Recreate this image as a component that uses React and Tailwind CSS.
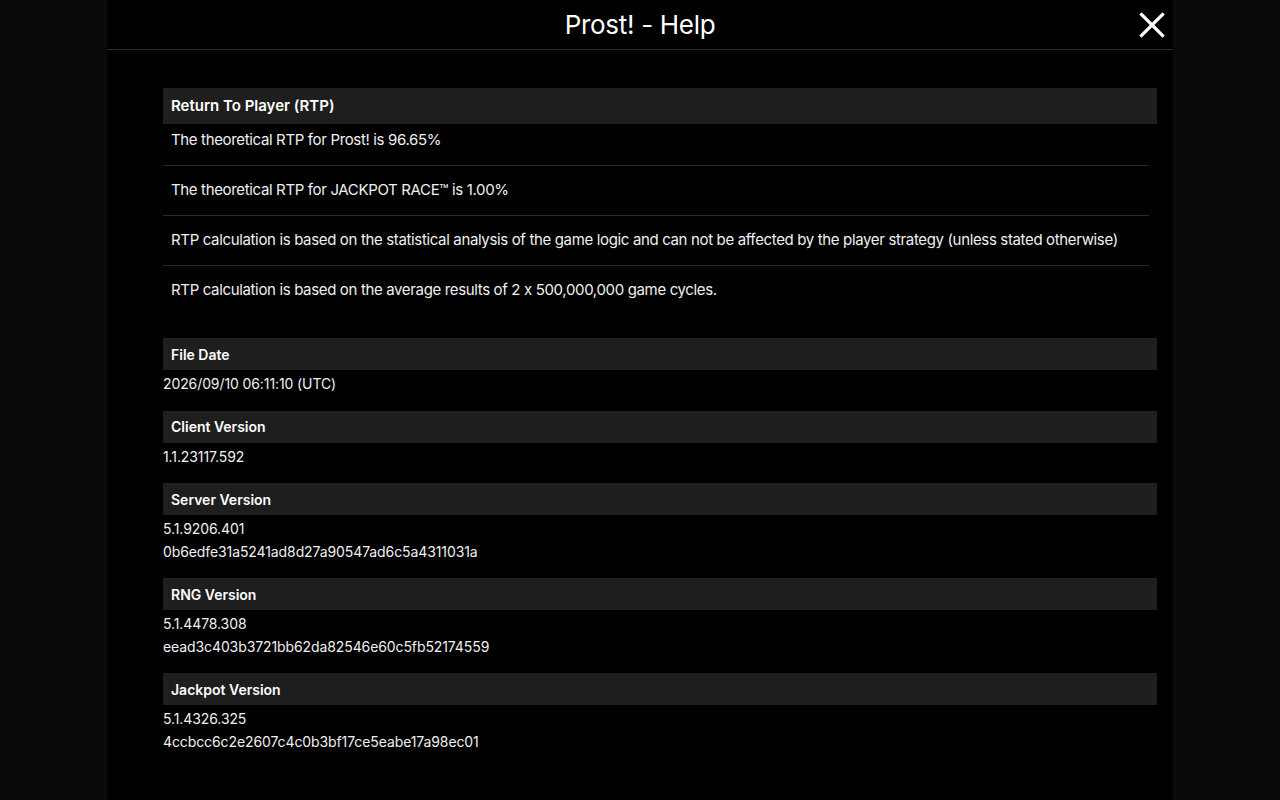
import React from 'react';

const rtpRows = [
  'The theoretical RTP for Prost! is 96.65%',
  'The theoretical RTP for JACKPOT RACE™ is 1.00%',
  'RTP calculation is based on the statistical analysis of the game logic and can not be affected by the player strategy (unless stated otherwise)',
  'RTP calculation is based on the average results of 2 x 500,000,000 game cycles.',
];

const infoSections = [
  { title: 'File Date', lines: ['2026/09/10 06:11:10 (UTC)'] },
  { title: 'Client Version', lines: ['1.1.23117.592'] },
  { title: 'Server Version', lines: ['5.1.9206.401', '0b6edfe31a5241ad8d27a90547ad6c5a4311031a'] },
  { title: 'RNG Version', lines: ['5.1.4478.308', 'eead3c403b3721bb62da82546e60c5fb52174559'] },
  { title: 'Jackpot Version', lines: ['5.1.4326.325', '4ccbcc6c2e2607c4c0b3bf17ce5eabe17a98ec01'] },
];

const CloseIcon = () => (
  <svg width="26" height="26" viewBox="0 0 26 26" fill="none" stroke="white" strokeWidth="3.2" strokeLinecap="square">
    <line x1="2.5" y1="2.5" x2="23.5" y2="23.5" />
    <line x1="23.5" y1="2.5" x2="2.5" y2="23.5" />
  </svg>
);

const App = () => {
  return (
    <div
      className="w-[1280px] h-[800px] overflow-hidden bg-[#0a0909] flex justify-center text-white [font-feature-settings:'calt'_0]"
      style={{ fontFamily: 'Inter, "Noto Sans", sans-serif' }}
    >
      <div className="w-[1066px] h-full bg-black flex flex-col">
        {/* Header */}
        <div className="relative h-[50px] shrink-0 flex items-center justify-center border-b border-[#2e2e2e]">
          <h1 className="text-[26px] leading-none font-normal tracking-[-0.3px]">Prost! - Help</h1>
          <button className="absolute right-[8px] top-[12px] w-[26px] h-[26px]">
            <CloseIcon />
          </button>
        </div>

        {/* Scrollable body */}
        <div className="flex-1 overflow-hidden pl-[56px] pr-[16px] pt-[38px]">
          {/* RTP section */}
          <div className="bg-[#1e1e1e] h-[36px] flex items-center px-2">
            <h2 className="text-[15px] font-semibold">Return To Player (RTP)</h2>
          </div>
          <div className="mr-2 mb-[23px]">
            {rtpRows.map((row, i) => (
              <div
                key={i}
                className={`px-2 text-[15px] leading-[22px] tracking-[-0.35px] text-[#f0f0f0] ${i === 0 ? 'pt-[5px] pb-[14px]' : 'pt-[13px] pb-[14px]'} ${i < rtpRows.length - 1 ? 'border-b border-[#2a2a2a]' : ''}`}
              >
                {row}
              </div>
            ))}
          </div>

          {/* Info sections */}
          {infoSections.map((s) => (
            <div key={s.title} className="mb-[15px]">
              <div className="bg-[#1e1e1e] h-[32px] flex items-center px-2">
                <h3 className="text-[14px] font-semibold">{s.title}</h3>
              </div>
              <div className="pt-[3px] text-[14px] leading-[22.5px] tracking-[-0.1px] text-[#f0f0f0]">
                {s.lines.map((l) => (
                  <div key={l}>{l}</div>
                ))}
              </div>
            </div>
          ))}
        </div>
      </div>
    </div>
  );
};

export default App;
